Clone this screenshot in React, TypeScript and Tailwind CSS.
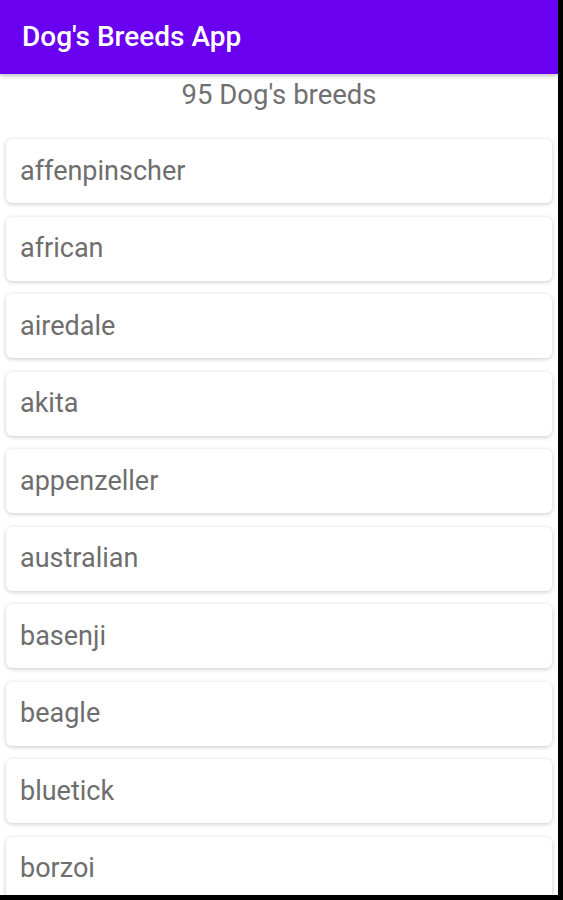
import React from "react";

const breeds = [
  "affenpinscher",
  "african",
  "airedale",
  "akita",
  "appenzeller",
  "australian",
  "basenji",
  "beagle",
  "bluetick",
  "borzoi",
  "bouvier",
];

export default function App() {
  return (
    <div className="w-[563px] h-[900px] bg-black overflow-hidden" style={{ fontFamily: "Roboto, 'Noto Sans', sans-serif" }}>
      <div className="w-[558px] h-[895px] bg-white overflow-hidden flex flex-col">
        <div className="h-[74px] shrink-0 bg-[#6a00f0] flex items-center px-[22px] shadow-[0_2px_4px_rgba(0,0,0,0.25)] relative z-10">
          <span className="text-white text-[28px] font-medium leading-none">Dog's Breeds App</span>
        </div>
        <div className="h-[42px] shrink-0 flex items-center justify-center">
          <span className="text-[#707070] text-[27.5px] leading-none">95 Dog's breeds</span>
        </div>
        <div className="flex flex-col gap-[13.5px] pt-[23px] px-[6px]">
          {breeds.map((b) => (
            <div
              key={b}
              className="h-[64px] shrink-0 bg-white rounded-[6px] flex items-center px-[14px] shadow-[0_1px_4px_rgba(0,0,0,0.22)]"
            >
              <span className="text-[#6e6e6e] text-[27px] leading-none">{b}</span>
            </div>
          ))}
        </div>
      </div>
    </div>
  );
}
